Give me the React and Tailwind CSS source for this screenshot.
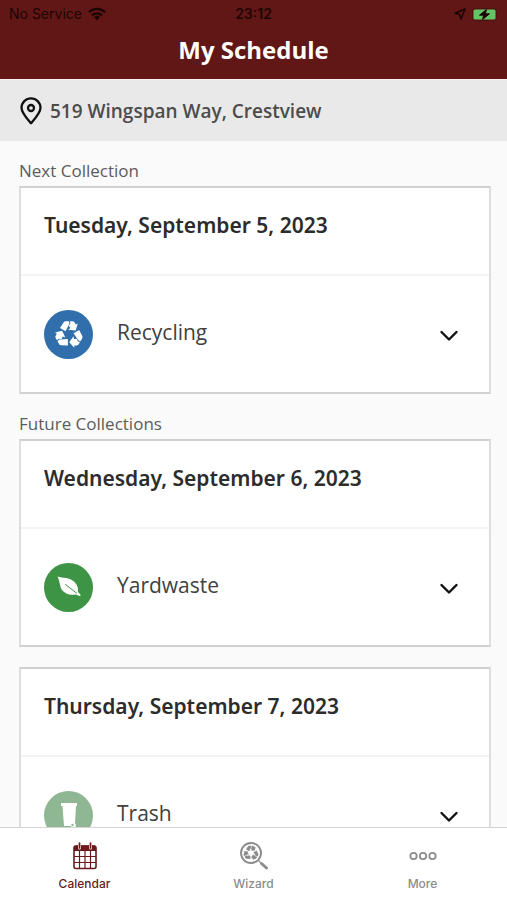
import React, { useState } from "react";

const WifiIcon = () => (
  <svg width="18" height="14" viewBox="0 0 18 14" fill="none" stroke="currentColor" strokeWidth="2.4">
    <path d="M1 5.2a11.4 11.4 0 0 1 16 0" />
    <path d="M4 8.4a7.2 7.2 0 0 1 10 0" />
    <path d="M9 13.2l-2.9-3a4.1 4.1 0 0 1 5.8 0z" fill="currentColor" stroke="none" />
  </svg>
);

const LocationArrow = () => (
  <svg width="12" height="12" viewBox="0 0 12 12" fill="none" stroke="currentColor" strokeWidth="1.6" strokeLinejoin="round">
    <path d="M11 1L1 5.2l4.6 1.2L7 11z" />
  </svg>
);

const BatteryIcon = () => (
  <svg width="26" height="13" viewBox="0 0 26 13">
    <rect x="0.5" y="0.5" width="24" height="12" rx="3" fill="none" stroke="#4a1411" />
    <rect x="1.5" y="1.5" width="22" height="10" rx="1.5" fill="#63c466" />
    <path d="M14.4 1.5L7.5 7.2h4.1L10.6 11.5 17.5 5.8h-4.1z" fill="#1c0504" stroke="#1c0504" strokeLinejoin="round" />
  </svg>
);

const PinIcon = () => (
  <svg width="22" height="28" viewBox="0 0 22 28" fill="none" stroke="#111111" strokeWidth="2.3" strokeLinejoin="round">
    <path d="M11 26.2C7 21.6 1.5 16 1.5 10.8a9.5 9.5 0 0 1 19 0C20.5 16 15 21.6 11 26.2z" />
    <circle cx="11" cy="11" r="3" />
  </svg>
);

// One bent arrow, drawn three times around the centre
const recycleArrow = (
  <>
    <path d="M5 8L8.6 2.4Q9.4 1.2 10.8 1.2H14L14.4 3.6 10.6 11.2z" />
    <path d="M15 1.2H17.4Q18.8 1.2 19.6 2.4L20.8 4.4 22.8 3.4 20.6 10.4 13.2 9.8 15.4 8 13.8 5.8 15.4 3.6z" />
  </>
);

const RecycleArrows = () => (
  <>
    <g>{recycleArrow}</g>
    <g transform="rotate(120 14 14.5)">{recycleArrow}</g>
    <g transform="rotate(240 14 14.5)">{recycleArrow}</g>
  </>
);

const RecycleIcon = () => (
  <svg width="28" height="28" viewBox="0 0 28 28" fill="#ffffff">
    <RecycleArrows />
  </svg>
);

const LeafIcon = () => (
  <svg width="24" height="22" viewBox="0 0 24 22">
    <path d="M0.5 0.5C6 2.2 12.5 1.2 17.5 6c3.3 3.3 3.8 6.6 3.4 9.8l2.8 3.3-.7 1.2-4-1.9C13 19.5 8.2 18.2 5 14 2.4 10 3 5 0.5 0.5z" fill="#ffffff" />
    <path d="M8.5 8.5c3.5 2.5 6.5 5.2 11 8.5" fill="none" stroke="#3c9444" strokeWidth="1" strokeLinecap="round" />
  </svg>
);

const BinIcon = () => (
  <svg width="18" height="26" viewBox="0 0 18 26" fill="#ffffff">
    <path d="M1 1h16v3h-1l-1 17.5A2.5 2.5 0 1 1 11 24H4L2.5 4H1z" />
    <circle cx="12.5" cy="23" r="1.2" fill="#8fb793" />
  </svg>
);

const ChevronIcon = ({ open }) => (
  <svg
    width="20"
    height="12"
    viewBox="0 0 20 12"
    fill="none"
    stroke="#111111"
    strokeWidth="2.4"
    strokeLinecap="round"
    strokeLinejoin="round"
    className={open ? "rotate-180" : ""}
  >
    <path d="M2.5 2L10 9.5 17.5 2" />
  </svg>
);

const CalendarIcon = () => (
  <svg width="24" height="28" viewBox="0 0 24 28" fill="none" stroke="currentColor">
    <path d="M1 5.5Q1 3.5 3 3.5H21Q23 3.5 23 5.5V9H1z" fill="currentColor" stroke="none" />
    <rect x="1" y="4" width="22" height="22.5" rx="2" strokeWidth="1.6" />
    <path d="M1 14.5h22M1 20.5h22M6.5 9v17M12 9v17M17.5 9v17" strokeWidth="1.2" />
    <path d="M6.5 4v2M17.5 4v2" stroke="#ffffff" strokeWidth="3" strokeLinecap="round" />
    <path d="M6.5 1v5M17.5 1v5" strokeWidth="1.7" strokeLinecap="round" />
  </svg>
);

const WizardIcon = () => (
  <svg width="30" height="30" viewBox="0 0 30 30" fill="none" stroke="currentColor">
    <circle cx="12" cy="12" r="10" strokeWidth="1.9" />
    <path d="M22.5 22.5l5 4.5" strokeWidth="3" strokeLinecap="round" />
    <path d="M19.5 19.5l2 2" strokeWidth="1.3" />
    <g transform="translate(4.3 4) scale(0.55)" fill="currentColor" stroke="none">
      <RecycleArrows />
    </g>
  </svg>
);

const MoreIcon = () => (
  <svg width="28" height="10" viewBox="0 0 28 10" fill="none" stroke="currentColor" strokeWidth="1.8">
    <circle cx="4.5" cy="5" r="3.2" />
    <circle cx="14" cy="5" r="3.2" />
    <circle cx="23.5" cy="5" r="3.2" />
  </svg>
);

const nextCollections = [
  { date: "Tuesday, September 5, 2023", type: "Recycling", color: "bg-[#316eac]", icon: <RecycleIcon /> },
];

const futureCollections = [
  { date: "Wednesday, September 6, 2023", type: "Yardwaste", color: "bg-[#3c9444]", icon: <LeafIcon /> },
  { date: "Thursday, September 7, 2023", type: "Trash", color: "bg-[#8fb793]", icon: <BinIcon /> },
];

const tabs = [
  { name: "Calendar", icon: <CalendarIcon /> },
  { name: "Wizard", icon: <WizardIcon /> },
  { name: "More", icon: <MoreIcon /> },
];

const CollectionCard = ({ item }) => {
  const [open, setOpen] = useState(false);

  return (
    <article className="mb-5 border-2 border-x-[#dedede] border-y-[#d0d0d0] bg-white">
      <h3 className="border-b-2 border-[#f3f3f3] px-[23px] pt-[23px] pb-[35px] font-['Noto_Sans','Open_Sans',sans-serif] text-[21px] leading-7 font-semibold text-[#2c2c2c]">
        {item.date}
      </h3>
      <button
        type="button"
        aria-expanded={open}
        onClick={() => setOpen(!open)}
        className="flex h-[116px] w-full items-center px-[23px] text-left"
      >
        <span className={`flex h-[49px] w-[49px] items-center justify-center rounded-full ${item.color}`}>
          {item.icon}
        </span>
        <span className="ml-6 flex-1 pb-1 text-[21px] leading-7 text-[#414141]">{item.type}</span>
        <span className="mr-[7px] pt-1">
          <ChevronIcon open={open} />
        </span>
      </button>
    </article>
  );
};

const App = () => {
  const [activeTab, setActiveTab] = useState("Calendar");

  return (
    <div className="flex h-screen flex-col bg-[#fafafa] font-['Open_Sans',sans-serif]">
      {/* Header */}
      <header className="bg-[#611715] pb-[13px]">
        <div className="grid grid-cols-3 items-center px-[9px] pt-1 font-[Inter,sans-serif] text-sm leading-5 text-[#1c0504]">
          <div className="flex items-center gap-1.5">
            No Service <WifiIcon />
          </div>
          <div className="text-center font-semibold">23:12</div>
          <div className="flex items-center justify-end gap-1.5">
            <LocationArrow />
            <BatteryIcon />
          </div>
        </div>
        <h1 className="pt-2.5 text-center text-2xl leading-8 font-bold text-white">My Schedule</h1>
      </header>

      {/* Address */}
      <div className="flex items-center gap-2 border-t border-[#f5f1f1] bg-[#e9e9e9] px-5 pt-[17px] pb-4">
        <PinIcon />
        <span className="text-[19px] leading-7 font-semibold text-[#4c4c4c]">519 Wingspan Way, Crestview</span>
      </div>

      {/* Collections */}
      <main className="min-h-0 flex-1 overflow-hidden pt-5 pr-4 pl-[19px]">
        <h2 className="pb-[5px] text-[17px] leading-5 text-[#5c5c5c]">Next Collection</h2>
        {nextCollections.map((item) => (
          <CollectionCard key={item.date} item={item} />
        ))}
        <h2 className="pb-[5px] text-[17px] leading-5 text-[#5c5c5c]">Future Collections</h2>
        {futureCollections.map((item) => (
          <CollectionCard key={item.date} item={item} />
        ))}
      </main>

      {/* Bottom tabs */}
      <nav className="grid h-[73px] grid-cols-3 border-t border-[#d4d4d4] bg-white pt-3">
        {tabs.map((tab) => (
          <button
            key={tab.name}
            type="button"
            onClick={() => setActiveTab(tab.name)}
            className={`flex flex-col items-center font-[Inter,sans-serif] text-xs leading-4 font-medium ${
              activeTab === tab.name ? "text-[#6b1a1c]" : "text-[#8c8c8c]"
            }`}
          >
            <span className="mb-1 flex h-8 items-center">{tab.icon}</span>
            {tab.name}
          </button>
        ))}
      </nav>
    </div>
  );
};

export default App;
